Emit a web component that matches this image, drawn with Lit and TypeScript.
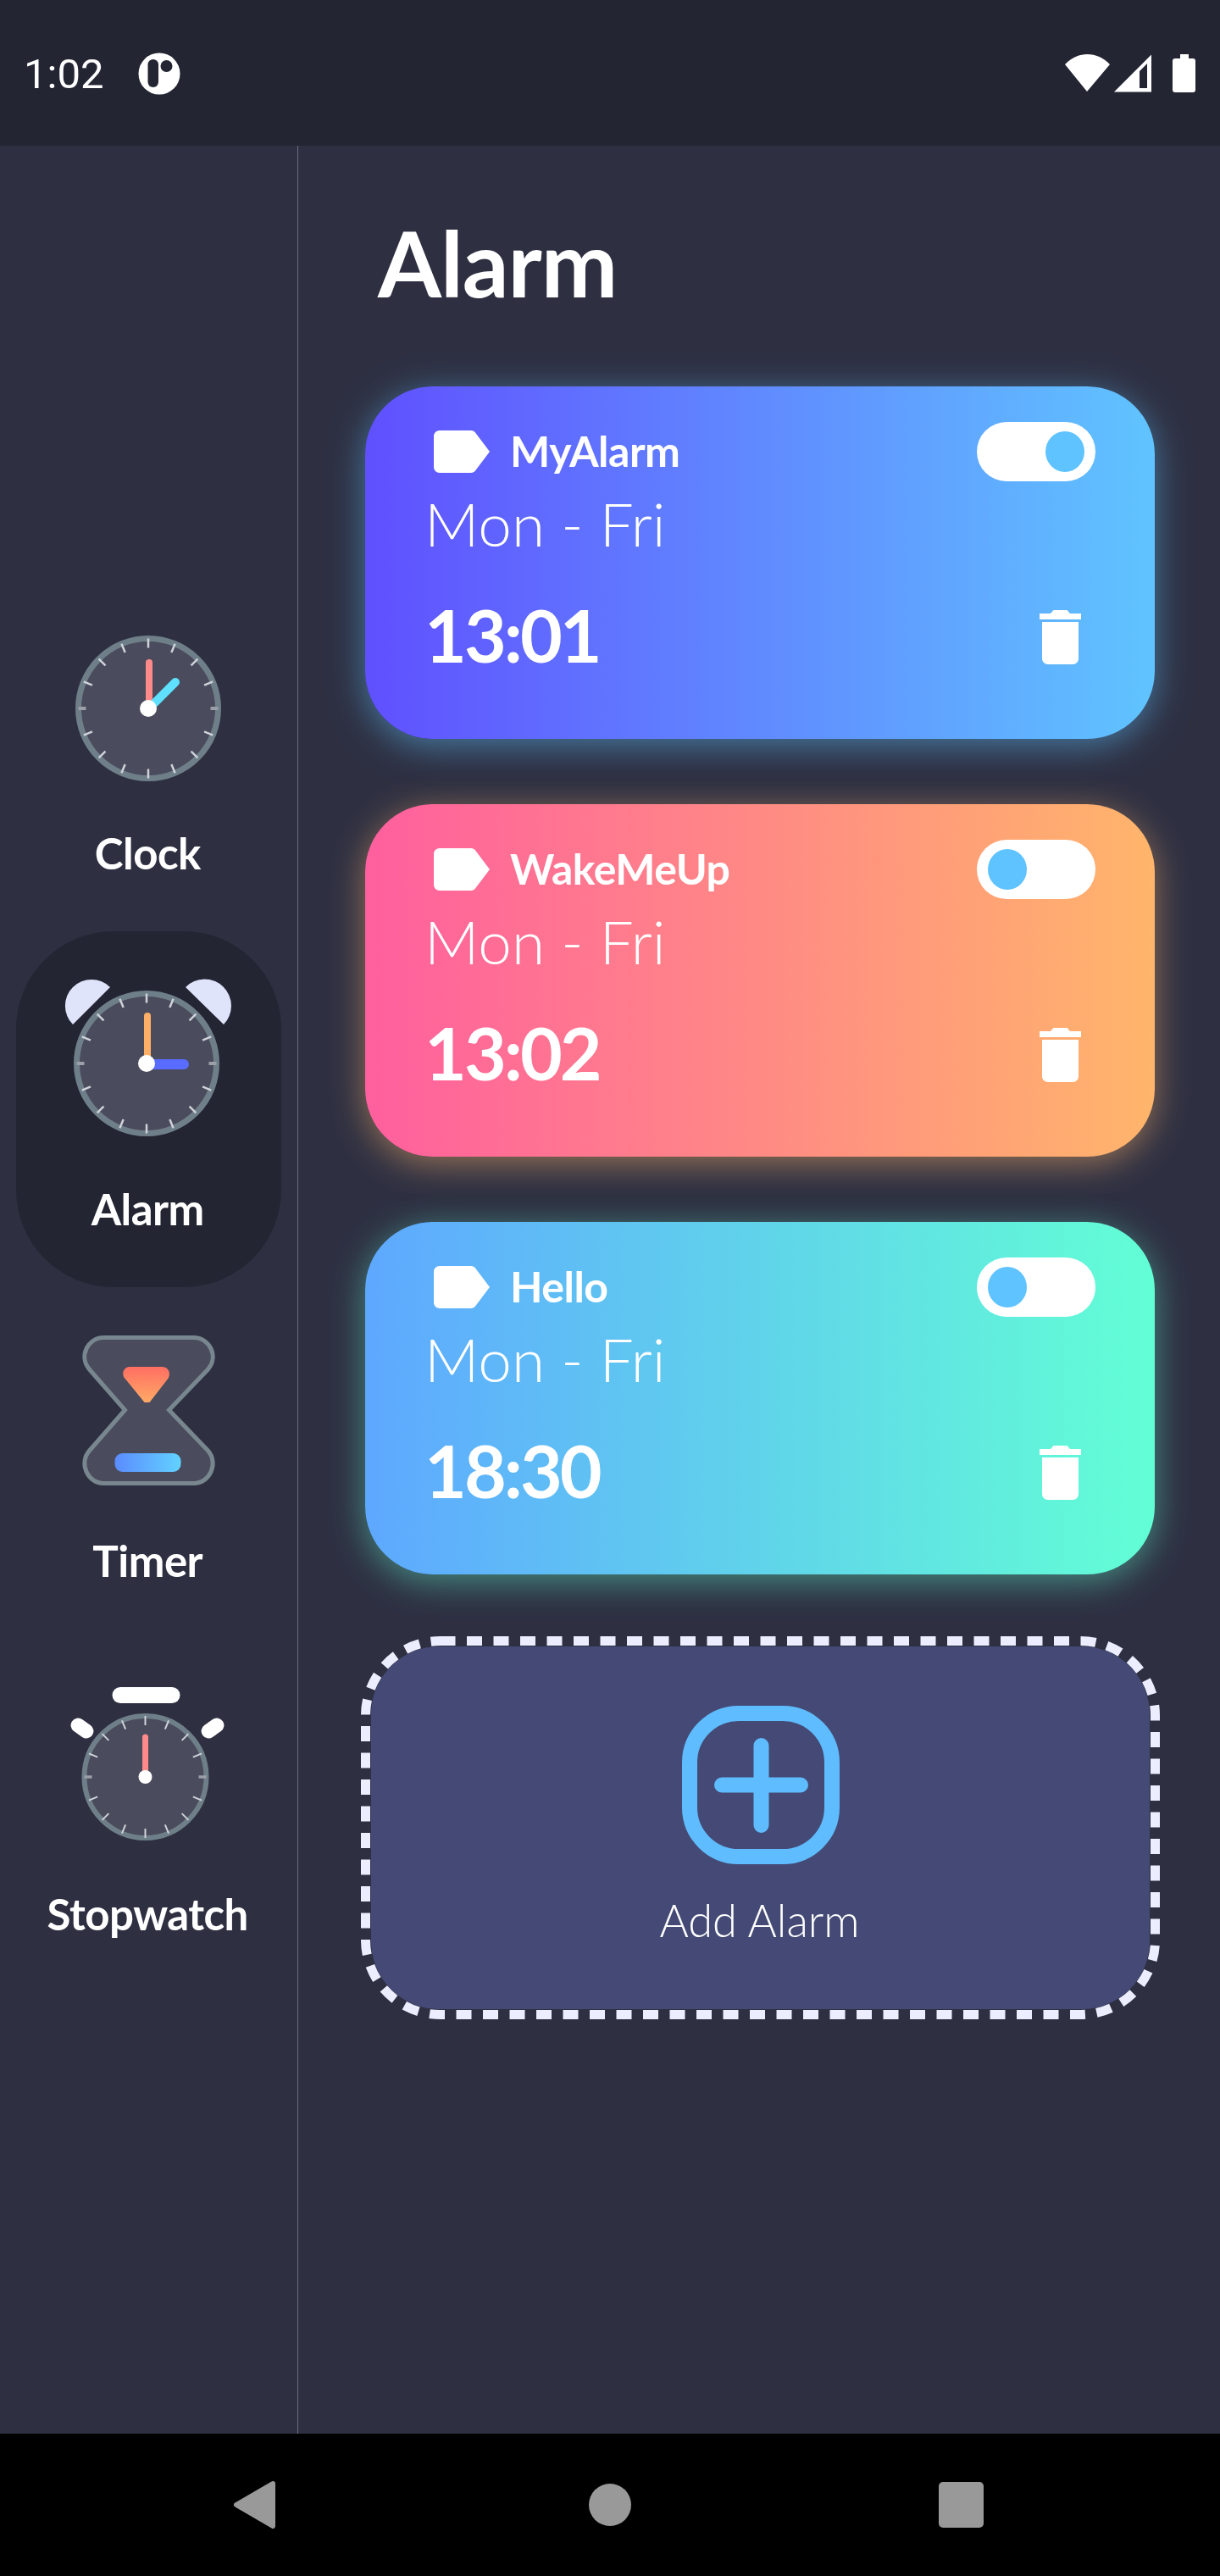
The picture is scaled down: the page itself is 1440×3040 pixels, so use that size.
import { LitElement, html, css, svg } from "lit";
import { customElement } from "lit/decorators.js";

function face(cx: number, cy: number, r: number, sw: number, tickW: number, hands: any, dot: number) {
  const ticks = [];
  for (let i = 0; i < 16; i++) {
    const a = (i * Math.PI) / 8;
    const o = r - sw / 2;
    const side = i % 8 === 4;
    const l = side ? 9 : 11;
    ticks.push(svg`<line x1=${cx + Math.sin(a) * o} y1=${cy - Math.cos(a) * o} x2=${cx + Math.sin(a) * (o - l)} y2=${cy - Math.cos(a) * (o - l)} stroke=${side ? "#9a9fa8" : "#cfd3da"} stroke-width=${side ? tickW + 1.5 : tickW}/>`);
  }
  return svg`
    <circle cx=${cx} cy=${cy} r=${r - sw / 2} fill="#4a4b5c" stroke="#6f7f89" stroke-width=${sw}/>
    ${ticks}
    ${hands}
    <circle cx=${cx} cy=${cy} r=${dot} fill="#fff"/>`;
}

const hand = (x1: number, y1: number, x2: number, y2: number, c: string, w: number) =>
  svg`<line x1=${x1} y1=${y1} x2=${x2} y2=${y2} stroke=${c} stroke-width=${w} stroke-linecap="round"/>`;

const clockIcon = html`<svg class="ico" width="311" height="272" viewBox="0 0 311 272">
  ${face(155, 157, 86, 7, 2.5, [hand(156, 157, 156, 103, "#ff8a8a", 8), hand(156, 157, 187, 126, "#5fe0ff", 10)], 10)}
</svg>`;

const alarmIcon = html`<svg class="ico" width="311" height="272" viewBox="0 0 311 272">
  <path d="M110 66 A31 31 0 0 0 66 110 Z" fill="#e0e4fb"/>
  <path d="M199 66 A31 31 0 0 1 244 110 Z" fill="#e0e4fb"/>
  ${face(153, 156, 86, 7, 2.5, [hand(154, 156, 154, 100, "#ffb066", 8), hand(154, 157, 197, 157, "#5a6cff", 12)], 10)}
</svg>`;

const timerIcon = html`<svg class="ico" width="311" height="267" viewBox="1.5 0 311 267">
  <defs>
    <linearGradient id="sand" x1="0" y1="0" x2="0" y2="1"><stop offset="0" stop-color="#ff6e62"/><stop offset="1" stop-color="#ffaa66"/></linearGradient>
    <linearGradient id="base" x1="0" y1="0" x2="1" y2="0"><stop offset="0" stop-color="#5b8cff"/><stop offset="1" stop-color="#62d2ff"/></linearGradient>
  </defs>
  <path d="M104 59.5 H210 C229 59.5 240 82 227 97 L181 145 L227 193 C240 208 229 231.5 210 231.5 H104 C85 231.5 74 208 87 193 L129 145 L87 97 C74 82 85 59.5 104 59.5 Z" fill="#4a4b5c" stroke="#78878f" stroke-width="5"/>
  <path d="M135 94 H173 C181 94 184 103 179 109 L158 136 H152 L130 109 C124 103 127 94 135 94 Z" fill="url(#sand)"/>
  <rect x="117" y="196" width="78" height="22" rx="9" fill="url(#base)"/>
</svg>`;

const swIcon = html`<svg class="ico" width="311" height="264" viewBox="1.5 0 311 264">
  <rect x="114" y="52" width="80" height="19" rx="9.5" fill="#fff"/>
  <rect x="64" y="92" width="29" height="17" rx="8.5" fill="#fff" transform="rotate(35 78.5 100.5)"/>
  <rect x="218" y="92" width="29" height="17" rx="8.5" fill="#fff" transform="rotate(-35 232.5 100.5)"/>
  ${face(153, 158, 75, 6, 2, [hand(153, 158, 153, 111, "#ff8a8a", 7)], 8)}
</svg>`;

const tag = html`<svg class="tag" width="66" height="50" viewBox="0 0 66 50"><path d="M7 0 H44 C46 0 48 1 49 2.500 L66 25 L49 47.500 C48 49 46 50 44 50 H7 C3 50 0 47 0 43 V7 C0 3 3 0 7 0 Z" fill="#fff"/></svg>`;

const trash = html`<svg class="trash" width="49" height="64" viewBox="0 0 49 64"><path d="M0 4 H13 L16.500 0 H32.500 L36 4 H49 V11 H0 Z" fill="#fff"/><path d="M3 14 H46 V57 C46 61 43 64 39 64 H10 C6 64 3 61 3 57 Z" fill="#fff"/></svg>`;

const alarms = [
  { name: "MyAlarm", time: "13:01", on: true, cls: "blue" },
  { name: "WakeMeUp", time: "13:02", on: false, cls: "orange" },
  { name: "Hello", time: "18:30", on: false, cls: "green" },
];

const nav = [
  { label: "Clock", icon: clockIcon, active: false },
  { label: "Alarm", icon: alarmIcon, active: true },
  { label: "Timer", icon: timerIcon, active: false },
  { label: "Stopwatch", icon: swIcon, active: false },
];

@customElement("app-root")
export class AppRoot extends LitElement {
  static styles = css`
    :host { display: block; width: 1440px; height: 3040px; background: #2e3042; overflow: hidden; font-family: Lato, "Open Sans", sans-serif; color: #fff; }
    .shell { display: flex; flex-direction: column; height: 3040px; }
    .status { height: 172px; flex: none; background: #232533; display: flex; align-items: center; padding: 0 27px 0 28px; box-sizing: border-box; }
    .clock-text { font: 400 49px/1 Roboto, sans-serif; margin-top: 2px; width: 135px; }
    .status-logo { display: block; margin-top: 2px; }
    .spacer { flex: 1; }
    .status-icons { display: block; margin-top: 1px; }
    .body { flex: 1; display: flex; min-height: 0; }
    .side { width: 352px; flex: none; box-sizing: border-box; border-right: 1.500px solid #6b6d80; padding: 507px 19.500px 0 19px; display: flex; flex-direction: column; }
    .item { height: 420px; display: flex; flex-direction: column; align-items: center; border-radius: 115px; flex: none; }
    .item.active { background: #232533; }
    .ico { display: block; flex: none; }
    .label { font-size: 51px; line-height: 60px; font-weight: 700; letter-spacing: -0.5px; margin: 26px 2px 0 0; }
    .main { flex: 1; padding: 0 0 0 79px; display: flex; flex-direction: column; }
    h1 { margin: 70px 0 0 15px; font-size: 108px; line-height: 134px; font-weight: 700; letter-spacing: -1px; height: 214px; }
    .card { width: 932px; height: 416px; border-radius: 80px; box-sizing: border-box; padding: 42px 70px 0 76px; flex: none; margin-bottom: 77px; display: flex; flex-direction: column; }
    .blue { background: linear-gradient(90deg, #6050ff, #60c4ff); box-shadow: 0 8px 40px rgba(96, 196, 255, 0.5); }
    .orange { background: linear-gradient(90deg, #ff5f9e, #ffb56b); box-shadow: 0 8px 40px rgba(255, 181, 107, 0.5); }
    .green { background: linear-gradient(90deg, #5ea8ff, #62ffd5); box-shadow: 0 8px 40px rgba(98, 255, 213, 0.45); }
    .row { display: flex; align-items: center; }
    .top { height: 70px; }
    .tag { display: block; margin-left: 5px; flex: none; }
    .name { font-size: 50px; font-weight: 700; margin-left: 24px; margin-top: -2px; flex: 1; letter-spacing: -0.5px; line-height: 70px; }
    .toggle { width: 140px; height: 70px; border-radius: 35px; background: #fff; display: flex; align-items: center; padding: 0 13px; box-sizing: border-box; flex: none; }
    .toggle.on { justify-content: flex-end; }
    .knob { width: 46px; height: 48px; border-radius: 50%; background: #5fc3ff; }
    .days { font-size: 71px; font-weight: 300; line-height: 80px; margin: 10px 0 0 -6px; }
    .bottom { margin-top: 40px; height: 100px; }
    .time { font-size: 86px; font-weight: 700; flex: 1; line-height: 100px; letter-spacing: -3px; margin-left: -6px; margin-top: 2px; }
    .trash { display: block; margin-right: 17px; margin-top: 8px; flex: none; }
    .add-wrap { position: relative; width: 943px; height: 452px; margin: -4px 0 0 -5px; padding: 12px; box-sizing: border-box; }
    .dash { position: absolute; inset: 0; display: block; }
    .add { height: 428px; width: 919px; background: #444a75; border-radius: 80px; display: flex; flex-direction: column; align-items: center; padding-top: 70px; box-sizing: border-box; }
    .add-ico { display: block; flex: none; }
    .add-text { font-size: 52.500px; font-weight: 300; line-height: 60px; margin: 36px 2px 0 0; }
    .navbar { height: 168px; flex: none; background: #000; display: block; }
    .navbar svg { display: block; }
  `;

  render() {
    return html`<div class="shell">
      <div class="status">
        <span class="clock-text">1:02</span>
        <svg class="status-logo" width="50" height="50" viewBox="0 0 50 50">
          <circle cx="25" cy="25" r="24.500" fill="#fff"/>
          <rect x="11.500" y="8" width="12.500" height="33" rx="6.200" fill="#232533"/>
          <circle cx="33.500" cy="16" r="7" fill="#232533"/>
        </svg>
        <span class="spacer"></span>
        <svg class="status-icons" width="156" height="48" viewBox="0 0 156 48">
          <path d="M0 13 C15 -3 38 -3 53 13 L26 45 Z" fill="#fff"/>
          <path d="M58 45.500 L102 1.500 V45.500 Z M88 21 V41 H97 V12 Z" fill="#fff" fill-rule="evenodd"/>
          <path d="M136 1 H146 V6 H151 C153 6 154 7 154 9 V43 C154 45 153 46 151 46 H130 C128 46 127 45 127 43 V9 C127 7 128 6 130 6 H136 Z" fill="#fff"/>
        </svg>
      </div>
      <div class="body">
        <div class="side">
          ${nav.map((n) => html`<div class="item ${n.active ? "active" : ""}">${n.icon}<div class="label">${n.label}</div></div>`)}
        </div>
        <div class="main">
          <h1>Alarm</h1>
          ${alarms.map((a) => html`<div class="card ${a.cls}">
            <div class="row top">
              ${tag}
              <div class="name">${a.name}</div>
              <div class="toggle ${a.on ? "on" : ""}"><div class="knob"></div></div>
            </div>
            <div class="days">Mon - Fri</div>
            <div class="row bottom">
              <div class="time">${a.time}</div>
              ${trash}
            </div>
          </div>`)}
          <div class="add-wrap">
            <svg class="dash" width="943" height="452" viewBox="0 0 943 452">
              <rect x="5.500" y="5.500" width="932" height="441" rx="88" fill="none" stroke="#eceeff" stroke-width="11" stroke-dasharray="18 13.500"/>
            </svg>
            <div class="add">
              <svg class="add-ico" width="186" height="187" viewBox="0 0 186 187">
                <rect x="9" y="9" width="168" height="169" rx="58" fill="none" stroke="#5fbcff" stroke-width="18"/>
                <path d="M47 93.500 H140 M93.500 47 V141" stroke="#5fbcff" stroke-width="18" stroke-linecap="round"/>
              </svg>
              <div class="add-text">Add Alarm</div>
            </div>
          </div>
        </div>
      </div>
      <div class="navbar">
        <svg width="1440" height="168" viewBox="0 0 1440 168">
          <path d="M322 59 L279 84 L322 109 Z" fill="#999" stroke="#999" stroke-width="6" stroke-linejoin="round"/>
          <circle cx="720" cy="84" r="25" fill="#999"/>
          <rect x="1108" y="57" width="53" height="54" rx="5" fill="#999"/>
        </svg>
      </div>
    </div>`;
  }
}
